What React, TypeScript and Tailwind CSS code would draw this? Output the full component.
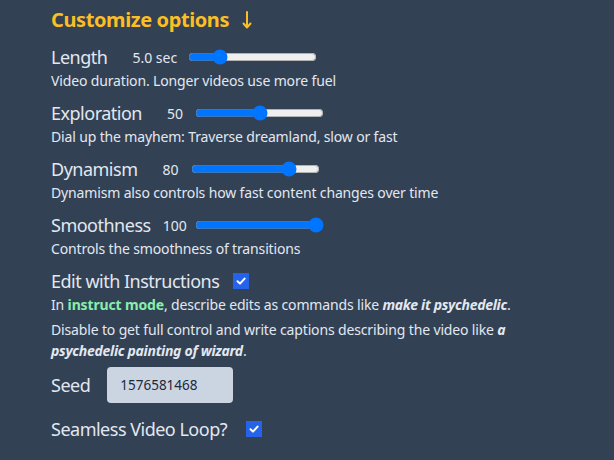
import React from "react";

type SliderRow = {
  label: string;
  value: string;
  min: number;
  max: number;
  current: number;
  help: string;
  valueGap: string;
  sliderGap: string;
};

const rows: SliderRow[] = [
  { label: "Length", value: "5.0 sec", min: 1, max: 20, current: 5, help: "Video duration. Longer videos use more fuel", valueGap: "ml-[25px]", sliderGap: "ml-[11px]" },
  { label: "Exploration", value: "50", min: 0, max: 100, current: 50, help: "Dial up the mayhem: Traverse dreamland, slow or fast", valueGap: "ml-[25px]", sliderGap: "ml-[12px]" },
  { label: "Dynamism", value: "80", min: 0, max: 100, current: 80, help: "Dynamism also controls how fast content changes over time", valueGap: "ml-[25px]", sliderGap: "ml-[12px]" },
  { label: "Smoothness", value: "100", min: 0, max: 100, current: 100, help: "Controls the smoothness of transitions", valueGap: "ml-[12px]", sliderGap: "ml-[8px]" },
];

function Check({ gap }: { gap: string }) {
  return (
    <span className={`${gap} inline-flex h-4 w-4 items-center justify-center bg-[#2563eb]`}>
      <svg viewBox="0 0 16 16" className="h-4 w-4" fill="none">
        <path d="M4.5 8.2 L7 10.6 L11.6 5.6" stroke="white" strokeWidth="2" strokeLinecap="round" strokeLinejoin="round" />
      </svg>
    </span>
  );
}

function DownArrow() {
  return (
    <svg viewBox="0 0 10 18" className="ml-[13px] h-[18px] w-[10px]" fill="none">
      <path d="M5 1 V16" stroke="#fbbf24" strokeWidth="2" strokeLinecap="round" />
      <path d="M1.5 12.5 L5 16.5 L8.5 12.5" stroke="#fbbf24" strokeWidth="2" strokeLinecap="round" strokeLinejoin="round" />
    </svg>
  );
}

export default function App() {
  return (
    <div
      className="min-h-[460px] w-[614px] bg-[#334155] pl-[51px] pr-[40px] pt-[6px] text-[#e2e8f0]"
      style={{ fontFamily: '"Noto Sans", "Open Sans", sans-serif' }}
    >
      <h2 className="flex items-center text-[20px] font-bold leading-[28px] tracking-[-0.4px] text-[#fbbf24]">
        Customize options
        <DownArrow />
      </h2>

      <div className="mt-[9px] flex flex-col gap-2">
        {rows.map((r) => (
          <div key={r.label}>
            <div className="flex h-[28px] items-center">
              <span className="text-[18px] leading-[28px] tracking-[-0.5px]">{r.label}</span>
              <span className={`${r.valueGap} text-[14px]`}>{r.value}</span>
              <input
                type="range"
                min={r.min}
                max={r.max}
                defaultValue={r.current}
                className={`${r.sliderGap} w-[129px]`}
              />
            </div>
            <p className="text-[14px] leading-[20px] tracking-[-0.15px]">{r.help}</p>
          </div>
        ))}

        <div>
          <div className="flex h-[28px] items-center">
            <span className="text-[18px] leading-[28px] tracking-[-0.5px]">Edit with Instructions</span>
            <Check gap="ml-[14px]" />
          </div>
          <p className="text-[14px] leading-[20px] tracking-[-0.15px]">
            In <span className="font-bold text-[#86efac]">instruct mode</span>, describe edits as commands like{" "}
            <span className="font-bold italic tracking-[-0.3px]">make it psychedelic</span>.
          </p>
          <p className="mt-[4px] text-[14px] leading-[21px] tracking-[-0.15px]">
            Disable to get full control and write captions describing the video like{" "}
            <span className="font-bold italic tracking-[-0.3px]">a psychedelic painting of wizard</span>.
          </p>
        </div>
      </div>

      <div className="mt-[6px] flex items-center">
        <span className="text-[18px] leading-[28px] tracking-[-0.5px]">Seed</span>
        <input
          type="text"
          defaultValue="1576581468"
          className="ml-[17px] h-[36px] w-[126px] rounded bg-[#cbd5e1] px-[13px] text-[13.5px] text-[#1e293b] outline-none"
        />
      </div>

      <div className="mt-[12px] flex h-[28px] items-center">
        <span className="text-[18px] leading-[28px] tracking-[-0.5px]">Seamless Video Loop?</span>
        <Check gap="ml-[19px]" />
      </div>
    </div>
  );
}
